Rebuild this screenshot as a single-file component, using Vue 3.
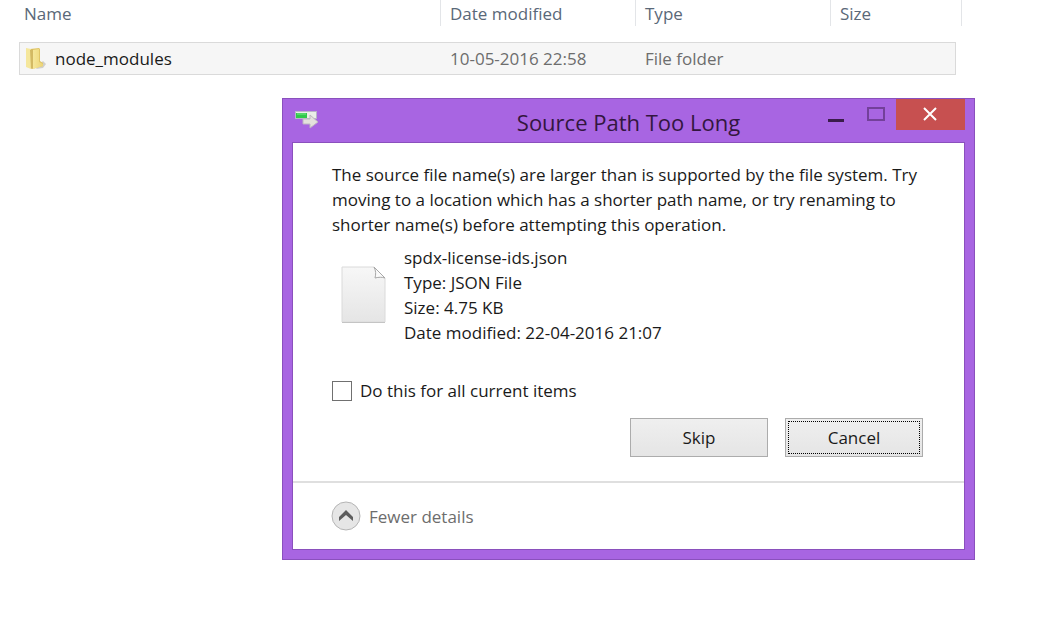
<script setup>
import { ref } from 'vue'

const columns = ['Name', 'Date modified', 'Type', 'Size']

const folders = [
  { name: 'node_modules', modified: '10-05-2016 22:58', type: 'File folder', size: '' }
]

const file = [
  'spdx-license-ids.json',
  'Type: JSON File',
  'Size: 4.75 KB',
  'Date modified: 22-04-2016 21:07'
]

const applyToAll = ref(false)
const open = ref(true)
const showDetails = ref(true)

function close() {
  open.value = false
}
</script>

<template>
  <main class="explorer">
    <table class="file-list">
      <colgroup>
        <col class="col-name">
        <col class="col-data">
        <col class="col-data">
        <col>
        <col class="col-edge">
      </colgroup>
      <thead>
        <tr>
          <th v-for="column in columns" :key="column" :colspan="column === 'Size' ? 2 : 1">
            <span class="heading">{{ column }}</span>
          </th>
        </tr>
      </thead>
      <tbody>
        <tr v-for="folder in folders" :key="folder.name">
          <td class="cell-name">
            <div class="name">
              <svg class="folder-icon" viewBox="0 0 22 24">
                <defs>
                  <linearGradient id="folder-front" x1="0" x2="1">
                    <stop offset="0" stop-color="#f6e79a" />
                    <stop offset="1" stop-color="#ecd476" />
                  </linearGradient>
                </defs>
                <path d="M13 19l5-5 3 3-3 4-7 1z" fill="#b9b6ac" opacity="0.6" />
                <path d="M5 2l9-1 1 1v12l3 2v3l-11 3z" fill="#e0c566" />
                <path d="M1 1l5 1v20l-5-2z" fill="#f5e79c" />
                <path d="M5 3l3-1v19l-2 1z" fill="#d3b963" />
                <path d="M8 3l6-1v13l4 2v2l-10 3z" fill="url(#folder-front)" />
              </svg>
              <span>{{ folder.name }}</span>
            </div>
          </td>
          <td>{{ folder.modified }}</td>
          <td>{{ folder.type }}</td>
          <td class="cell-size">{{ folder.size }}</td>
          <td class="cell-edge"></td>
        </tr>
      </tbody>
    </table>

    <section v-if="open" class="dialog" role="dialog" aria-labelledby="dialog-title">
      <header class="title-bar">
        <svg class="move-icon" viewBox="0 0 24 20">
          <rect x="0.500" y="1.500" width="21" height="7" fill="#e9efe7" stroke="#b9b5c9" />
          <rect x="1" y="3" width="11" height="5" fill="#2fc84a" />
          <path d="M2 4h9" stroke="#79e88a" />
          <path d="M8 9h7V5l8 7-8 6v-4H8z" fill="#e4e2dc" stroke="#bdb6c2" />
        </svg>
        <h1 id="dialog-title">Source Path Too Long</h1>
        <div class="window-buttons">
          <button class="window-button" aria-label="Minimize">
            <svg viewBox="0 0 18 16"><path d="M1 13.500h16" stroke="#3a1c4a" stroke-width="3" /></svg>
          </button>
          <button class="window-button" aria-label="Maximize" disabled>
            <svg viewBox="0 0 18 16"><rect x="1" y="1" width="16" height="12" fill="none" stroke="#73409a" stroke-width="2" /></svg>
          </button>
          <button class="window-button close-button" aria-label="Close" @click="close">
            <svg viewBox="0 0 18 16"><path d="M2 1l12 12M14 1L2 13" stroke="#fff" stroke-width="2" /></svg>
          </button>
        </div>
      </header>

      <div class="dialog-body">
        <div class="content">
          <p class="message">
            The source file name(s) are larger than is supported by the file system. Try
            moving to a location which has a shorter path name, or try renaming to
            shorter name(s) before attempting this operation.
          </p>

          <div v-if="showDetails" class="details">
            <svg class="file-icon" viewBox="0 0 46 58">
              <defs>
                <linearGradient id="page" x1="0" y1="0" x2="0" y2="1">
                  <stop offset="0" stop-color="#f7f7f7" />
                  <stop offset="1" stop-color="#e5e5e5" />
                </linearGradient>
              </defs>
              <path d="M1 1h32l11 11v44H1z" fill="url(#page)" stroke="#dadada" />
              <path d="M1 56.500h43" stroke="#c4c4c4" />
              <path d="M33 1c2 4 2 7 1 11 4-1 7-1 10 0z" fill="#fafafa" stroke="#a8a8a8" />
            </svg>
            <ul class="file-info">
              <li v-for="line in file" :key="line">{{ line }}</li>
            </ul>
          </div>

          <label class="apply-all">
            <input v-model="applyToAll" type="checkbox">
            <span>Do this for all current items</span>
          </label>

          <div class="actions">
            <button class="action" @click="close">Skip</button>
            <button class="action focused" @click="close">Cancel</button>
          </div>
        </div>

        <footer class="footer">
          <button class="details-toggle" :aria-expanded="showDetails" @click="showDetails = !showDetails">
            <svg class="toggle-icon" viewBox="0 0 30 30">
              <circle cx="15" cy="15" r="14" fill="#e6e6e6" stroke="#b5b5b5" />
              <path d="M8 16l7-7 7 7v4l-7-6-7 6z" fill="#5e5e5e" />
            </svg>
            <span>Fewer details</span>
          </button>
        </footer>
      </div>
    </section>
  </main>
</template>

<style>
body {
  margin: 0;
  background: #fff;
}
</style>

<style scoped>
.explorer {
  position: relative;
  min-height: 100vh;
  overflow: hidden;
  font-family: "Segoe UI", "Open Sans", "Noto Sans", sans-serif;
  font-size: 17px;
  line-height: 25px;
  color: #1a1a1a;
}

.file-list {
  width: calc(100% - 94px);
  margin-left: 19px;
  table-layout: fixed;
  border-collapse: separate;
  border-spacing: 0;
}

.col-name {
  width: 422px;
}

.col-data {
  width: 195px;
}

.col-edge {
  width: 6px;
}

th {
  padding: 0 0 16px;
  font-weight: 400;
  text-align: left;
  color: #5a6878;
}

.heading {
  display: block;
  height: 26px;
  padding-left: 9px;
  line-height: 27px;
  border-right: 1px solid #e3e5e8;
}

th:first-child .heading {
  padding-left: 5px;
}

td {
  height: 31px;
  padding: 0 0 0 9px;
  background: #f6f6f6;
  border: 1px solid #dadada;
  border-width: 1px 0;
  color: #6d6d6d;
}

.cell-name {
  padding-left: 5px;
  border-left-width: 1px;
  color: #1a1a1a;
}

.cell-size {
  border-right-width: 1px;
}

.cell-edge {
  padding: 0;
  background: none;
  border: 0;
}

.name {
  display: flex;
  align-items: center;
  gap: 8px;
}

.folder-icon {
  width: 22px;
  height: 24px;
}

.dialog {
  position: absolute;
  top: 98px;
  left: 282px;
  right: 62px;
  box-sizing: border-box;
  padding: 0 9px 9px;
  background: #a865e2;
  border: 1px solid #8a50bd;
}

.title-bar {
  display: grid;
  grid-template-columns: 1fr auto 1fr;
  height: 43px;
}

.move-icon {
  width: 24px;
  height: 20px;
  margin: 11px 0 0 3px;
}

h1 {
  margin: 0;
  font-size: 22px;
  font-weight: 400;
  line-height: 46px;
  color: #33163f;
}

.window-buttons {
  display: flex;
  justify-content: flex-end;
}

.window-button {
  display: flex;
  align-items: center;
  justify-content: center;
  width: 40px;
  height: 31px;
  padding: 0;
  background: none;
  border: 0;
}

.window-button svg {
  width: 18px;
  height: 16px;
}

.close-button {
  width: 69px;
  background: #c75050;
}

.dialog-body {
  background: #fff;
  border: 1px solid #8a50bd;
}

.content {
  padding: 19px 41px 24px 39px;
}

.message {
  margin: 0;
}

.details {
  display: flex;
  align-items: center;
  gap: 17px;
  margin-top: 8px;
}

.file-icon {
  width: 46px;
  height: 58px;
  margin-left: 9px;
}

.file-info {
  margin: 0;
  padding: 0;
  list-style: none;
}

.apply-all {
  display: flex;
  align-items: center;
  gap: 8px;
  width: max-content;
  margin-top: 33px;
}

.apply-all input {
  appearance: none;
  width: 20px;
  height: 20px;
  margin: 0;
  background: #fff;
  border: 1px solid #707070;
}

.apply-all input:checked {
  background: #707070;
  box-shadow: inset 0 0 0 4px #fff;
}

.actions {
  display: flex;
  justify-content: flex-end;
  gap: 17px;
  margin-top: 15px;
}

.action {
  width: 138px;
  height: 39px;
  padding: 0;
  font: inherit;
  color: #1a1a1a;
  background: linear-gradient(#efefef, #e5e5e5);
  border: 1px solid #acacac;
}

.focused {
  outline: 1px dotted #000;
  outline-offset: -4px;
}

.footer {
  padding: 18px 38px;
  border-top: 2px solid #dfdfdf;
}

.details-toggle {
  display: flex;
  align-items: center;
  gap: 8px;
  padding: 0;
  font: inherit;
  color: #6d6d6d;
  background: none;
  border: 0;
}

.toggle-icon {
  width: 30px;
  height: 30px;
}
</style>
